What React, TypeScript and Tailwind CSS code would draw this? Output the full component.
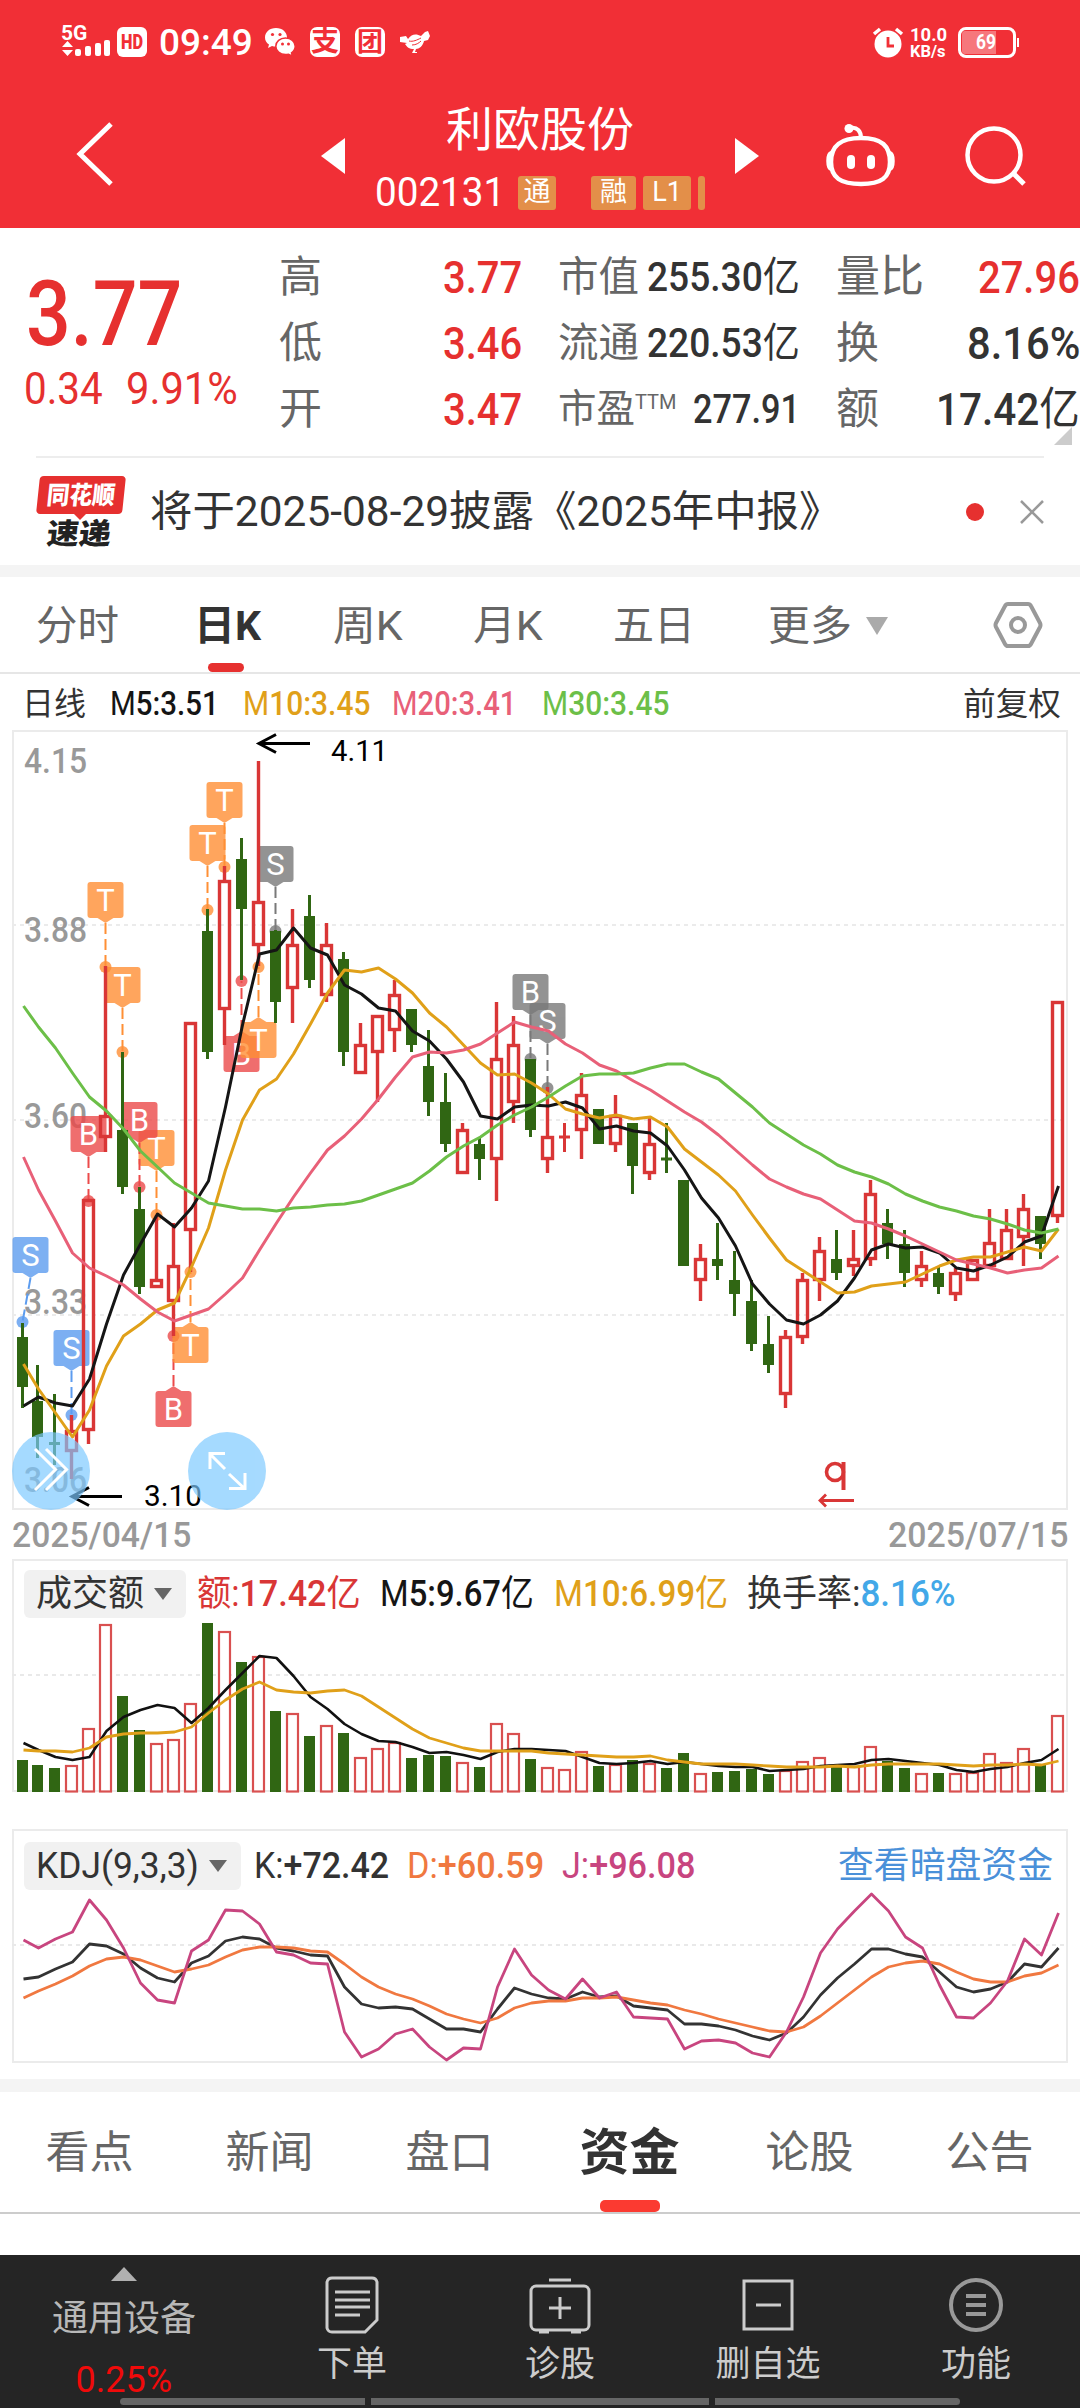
import React, { useLayoutEffect, useRef } from 'react';

const FONT = 'font-[Roboto,"Noto_Sans_CJK_SC",sans-serif]';

// Condenses or stretches a label so it fills exactly `w` pixels
const Fit = ({ w, className = '', children }: { w: number; className?: string; children: React.ReactNode }) => {
  const ref = useRef<HTMLSpanElement>(null);
  useLayoutEffect(() => {
    const el = ref.current;
    if (el) el.style.transform = `scaleX(${w / el.offsetWidth})`;
  });
  return (
    <span className={`block shrink-0 leading-none ${className}`} style={{ width: w }}>
      <span ref={ref} className="inline-block origin-left whitespace-nowrap leading-none align-top">{children}</span>
    </span>
  );
};

/* ---------- data ---------- */

// [up, high, open/close top, open/close bottom, low]
const candles: number[][] = [
  [0, 1323, 1337, 1387, 1408], [0, 1365, 1401, 1437, 1458], [0, 1394, 1442, 1445, 1465], [1, 1415, 1430, 1452, 1479],
  [1, 1199, 1199, 1431, 1444], [1, 966, 1115, 1138, 1152], [0, 1052, 1130, 1187, 1194], [0, 1187, 1209, 1287, 1294],
  [1, 1215, 1279, 1288, 1288], [1, 1223, 1265, 1302, 1336], [1, 1022, 1022, 1231, 1272], [0, 909, 931, 1052, 1059],
  [1, 866, 880, 1010, 1045], [0, 838, 859, 909, 980], [1, 761, 901, 946, 966], [0, 930, 931, 1002, 1023],
  [1, 909, 944, 989, 1023], [0, 895, 916, 980, 988], [1, 923, 944, 996, 1002], [0, 952, 959, 1052, 1066],
  [1, 1023, 1044, 1074, 1074], [1, 1015, 1015, 1053, 1102], [1, 980, 994, 1031, 1052], [0, 1009, 1009, 1045, 1052],
  [0, 1030, 1066, 1102, 1116], [0, 1073, 1102, 1144, 1152], [1, 1123, 1129, 1174, 1174], [0, 1137, 1144, 1159, 1180],
  [1, 1002, 1058, 1160, 1201], [1, 1016, 1044, 1103, 1123], [0, 1059, 1059, 1130, 1137], [1, 1087, 1136, 1160, 1173],
  [1, 1123, 1136, 1138, 1152], [1, 1073, 1094, 1131, 1159], [0, 1109, 1109, 1144, 1144], [1, 1095, 1115, 1145, 1152],
  [0, 1123, 1123, 1166, 1194], [1, 1117, 1143, 1174, 1180], [0, 1123, 1158, 1160, 1173], [0, 1180, 1180, 1266, 1266],
  [1, 1244, 1258, 1281, 1301], [0, 1223, 1259, 1266, 1280], [0, 1251, 1280, 1294, 1316], [0, 1280, 1301, 1344, 1351],
  [0, 1316, 1344, 1365, 1373], [1, 1330, 1336, 1395, 1408], [1, 1273, 1279, 1338, 1344], [1, 1237, 1250, 1281, 1301],
  [0, 1230, 1259, 1273, 1280], [1, 1230, 1258, 1267, 1276], [1, 1180, 1193, 1260, 1266], [0, 1209, 1223, 1244, 1259],
  [0, 1230, 1244, 1273, 1287], [1, 1251, 1265, 1281, 1287], [0, 1267, 1273, 1287, 1294], [1, 1268, 1272, 1295, 1301],
  [1, 1259, 1259, 1281, 1281], [1, 1209, 1242, 1267, 1267], [1, 1209, 1229, 1260, 1260], [1, 1194, 1208, 1238, 1266],
  [0, 1216, 1216, 1244, 1259], [1, 1001, 1001, 1217, 1223],
];

const ma5 = [1406, 1397, 1403, 1406, 1379, 1324, 1275, 1244, 1214, 1227, 1208, 1181, 1107, 1025, 954, 950, 928, 948, 955, 985, 994, 1008, 1011, 1031, 1041, 1059, 1082, 1116, 1119, 1107, 1105, 1106, 1102, 1108, 1129, 1126, 1131, 1133, 1146, 1170, 1198, 1218, 1246, 1284, 1304, 1320, 1324, 1315, 1301, 1278, 1250, 1244, 1248, 1247, 1253, 1268, 1271, 1265, 1257, 1242, 1236, 1186];
const ma10 = [1364, 1389, 1413, 1437, 1410, 1366, 1336, 1324, 1310, 1303, 1267, 1228, 1170, 1120, 1090, 1079, 1054, 1024, 993, 970, 972, 968, 979, 993, 1013, 1027, 1045, 1063, 1075, 1074, 1083, 1094, 1109, 1114, 1118, 1115, 1119, 1117, 1127, 1149, 1162, 1175, 1191, 1215, 1238, 1260, 1271, 1282, 1293, 1292, 1286, 1284, 1282, 1274, 1266, 1260, 1257, 1257, 1252, 1247, 1251, 1229];
const ma20 = [1157, 1190, 1221, 1253, 1268, 1276, 1285, 1299, 1312, 1321, 1315, 1309, 1294, 1278, 1250, 1223, 1197, 1173, 1150, 1136, 1119, 1099, 1077, 1057, 1052, 1053, 1050, 1044, 1033, 1022, 1027, 1031, 1044, 1053, 1065, 1071, 1081, 1090, 1101, 1112, 1122, 1135, 1150, 1165, 1179, 1187, 1194, 1199, 1210, 1221, 1223, 1229, 1236, 1244, 1252, 1260, 1264, 1268, 1273, 1270, 1268, 1256];
const ma30 = [1006, 1027, 1048, 1073, 1097, 1111, 1129, 1151, 1167, 1183, 1193, 1203, 1206, 1209, 1209, 1211, 1208, 1207, 1205, 1204, 1201, 1195, 1189, 1183, 1171, 1157, 1146, 1137, 1125, 1115, 1107, 1097, 1086, 1076, 1074, 1074, 1073, 1068, 1064, 1064, 1072, 1079, 1093, 1107, 1123, 1134, 1145, 1154, 1165, 1172, 1177, 1184, 1194, 1201, 1207, 1211, 1216, 1219, 1224, 1230, 1233, 1229];

const volTop = [1760, 1765, 1768, 1766, 1729, 1625, 1696, 1730, 1744, 1740, 1704, 1623, 1632, 1662, 1657, 1711, 1714, 1736, 1726, 1733, 1758, 1749, 1743, 1758, 1755, 1756, 1763, 1767, 1724, 1734, 1759, 1768, 1770, 1752, 1766, 1765, 1760, 1764, 1768, 1753, 1774, 1772, 1771, 1769, 1774, 1771, 1762, 1758, 1765, 1767, 1747, 1761, 1768, 1774, 1773, 1774, 1773, 1754, 1763, 1749, 1764, 1716];
const volMa5 = [1743, 1750, 1757, 1760, 1757, 1731, 1717, 1710, 1705, 1708, 1723, 1708, 1690, 1673, 1656, 1658, 1676, 1697, 1709, 1724, 1734, 1741, 1742, 1747, 1753, 1752, 1755, 1759, 1752, 1749, 1749, 1750, 1751, 1757, 1763, 1764, 1763, 1761, 1764, 1762, 1764, 1766, 1767, 1767, 1771, 1770, 1769, 1766, 1765, 1764, 1760, 1759, 1761, 1763, 1765, 1770, 1772, 1769, 1767, 1763, 1760, 1749];
const volMa10 = [1750, 1751, 1751, 1752, 1748, 1737, 1734, 1733, 1733, 1732, 1727, 1713, 1700, 1689, 1682, 1690, 1692, 1693, 1691, 1690, 1696, 1707, 1718, 1729, 1738, 1743, 1748, 1751, 1751, 1751, 1751, 1753, 1754, 1755, 1756, 1757, 1757, 1756, 1760, 1762, 1764, 1764, 1764, 1765, 1766, 1767, 1767, 1767, 1766, 1767, 1765, 1764, 1764, 1764, 1764, 1765, 1766, 1765, 1765, 1764, 1765, 1761];

const kdjJ = [1940, 1948, 1939, 1932, 1900, 1920, 1948, 1983, 2000, 2003, 1951, 1940, 1910, 1911, 1924, 1952, 1955, 1963, 1964, 2032, 2057, 2049, 2034, 2029, 2047, 2060, 2048, 2049, 1987, 1949, 1975, 1990, 1999, 1979, 1998, 1992, 2017, 2018, 2019, 2049, 2041, 2040, 2043, 2053, 2057, 2032, 1997, 1953, 1929, 1911, 1894, 1911, 1937, 1948, 1985, 2017, 2018, 2003, 1981, 1939, 1955, 1913];
const kdjK = [1979, 1977, 1969, 1962, 1944, 1946, 1954, 1968, 1978, 1982, 1963, 1956, 1941, 1937, 1939, 1948, 1951, 1955, 1956, 1987, 2004, 2008, 2007, 2009, 2019, 2029, 2029, 2032, 2009, 1988, 1994, 1998, 1999, 1992, 1997, 1996, 2006, 2008, 2010, 2024, 2024, 2026, 2030, 2036, 2040, 2033, 2017, 1995, 1978, 1964, 1949, 1949, 1954, 1957, 1972, 1987, 1992, 1989, 1982, 1964, 1967, 1948];
const kdjD = [1998, 1991, 1984, 1976, 1966, 1959, 1957, 1960, 1966, 1972, 1969, 1965, 1957, 1950, 1947, 1947, 1948, 1951, 1952, 1964, 1977, 1987, 1994, 1999, 2006, 2014, 2019, 2023, 2018, 2008, 2003, 2001, 2001, 1998, 1998, 1997, 2000, 2003, 2005, 2010, 2014, 2019, 2023, 2027, 2031, 2032, 2027, 2016, 2003, 1990, 1977, 1967, 1963, 1961, 1964, 1972, 1979, 1982, 1982, 1976, 1973, 1965];

const ORANGE = '#ff8f35';
const RED = '#ec4a4a';
const BLUE = '#5c9cef';
const GREY = '#797979';

const markers = [
  { i: 0, y: 1322, t: 'S', c: BLUE, dx: 8 },
  { i: 3, y: 1415, t: 'S', c: BLUE },
  { i: 4, y: 1201, t: 'B', c: RED },
  { i: 5, y: 967, t: 'T', c: ORANGE },
  { i: 6, y: 1052, t: 'T', c: ORANGE },
  { i: 8, y: 1215, t: 'T', c: ORANGE },
  { i: 7, y: 1187, t: 'B', c: RED },
  { i: 9, y: 1336, t: 'B', c: RED, below: true },
  { i: 10, y: 1272, t: 'T', c: ORANGE, below: true },
  { i: 11, y: 910, t: 'T', c: ORANGE },
  { i: 12, y: 867, t: 'T', c: ORANGE },
  { i: 13, y: 981, t: 'B', c: RED, below: true },
  { i: 14, y: 967, t: 'T', c: ORANGE, below: true },
  { i: 15, y: 931, t: 'S', c: GREY },
  { i: 30, y: 1059, t: 'B', c: GREY },
  { i: 31, y: 1088, t: 'S', c: GREY },
];

const xAt = (i: number) => (i === 0 ? 22.5 : 20.5 + 17 * i);
const points = (ys: number[]) => ys.map((y, i) => `${xAt(i) + 1},${y}`).join(' ');

/* ---------- charts ---------- */

const Line = ({ ys, color, width = 3 }: { ys: number[]; color: string; width?: number }) => (
  <polyline points={points(ys)} fill="none" stroke={color} strokeWidth={width} strokeLinejoin="round" />
);

const KLineChart = () => (
  <svg className="block" width="1080" height="784" viewBox="0 728 1080 784">
    <rect x="13" y="731" width="1054" height="778" fill="none" stroke="#ebebeb" strokeWidth="2" />
    {[925, 1120, 1315].map((y) => (
      <line key={y} x1="12" x2="1066" y1={y} y2={y} stroke="#ebebeb" strokeWidth="2" strokeDasharray="4 4" />
    ))}
    <g fill="#999" fontSize="35" fontFamily="Roboto" fontWeight="500">
      <text x="24" y="773" textLength="63" lengthAdjust="spacingAndGlyphs">4.15</text>
      <text x="24" y="942" textLength="63" lengthAdjust="spacingAndGlyphs">3.88</text>
      <text x="24" y="1128" textLength="63" lengthAdjust="spacingAndGlyphs">3.60</text>
      <text x="24" y="1314" textLength="63" lengthAdjust="spacingAndGlyphs">3.33</text>
      <text x="24" y="1492" textLength="63" lengthAdjust="spacingAndGlyphs">3.06</text>
    </g>

    {markers.map((m) => {
      const x = xAt(m.i);
      const bx = x + (m.dx ?? 0);
      const top = m.below ? m.y + 55 : m.y - 85;
      const tip = m.below ? top - 5 : top + 41;
      const base = m.below ? top : top + 36;
      return (
        <g key={m.i}>
          <g fill={m.c} opacity="0.8">
            <rect x={bx - 18} y={top} width="36" height="36" rx="3" />
            <polygon points={`${bx - 8},${base} ${bx + 8},${base} ${bx},${tip}`} />
            <circle cx={x} cy={m.y} r="6" />
          </g>
          <line x1={bx} y1={tip} x2={x} y2={m.y} stroke={m.c} strokeWidth="2" strokeDasharray="11 5" />
          <text x={bx} y={top + 29} fill="#fff" fontSize="31" fontFamily="Roboto" textAnchor="middle">{m.t}</text>
        </g>
      );
    })}

    {candles.map(([up, high, top, bottom, low], i) => {
      const x = xAt(i);
      const flat = bottom - top < 5;
      if (flat) {
        return (
          <g key={i} stroke={up ? '#d93636' : '#306613'} strokeWidth="3">
            <line x1={x} x2={x} y1={high} y2={low} />
            <line x1={x - 5.5} x2={x + 5.5} y1={(top + bottom) / 2} y2={(top + bottom) / 2} />
          </g>
        );
      }
      return up ? (
        <g key={i} fill="none" stroke="#d93636" strokeWidth="3.4">
          <line x1={x} x2={x} y1={high} y2={top} />
          <line x1={x} x2={x} y1={bottom} y2={low} />
          <rect x={x - 5} y={top + 1.5} width="10" height={bottom - top - 3} />
        </g>
      ) : (
        <g key={i} fill="#306613">
          <rect x={x - 1.5} y={high} width="3" height={low - high} />
          <rect x={x - 5.5} y={top} width="11" height={bottom - top} />
        </g>
      );
    })}

    <Line ys={ma5} color="#151515" />
    <Line ys={ma10} color="#e0a019" />
    <Line ys={ma20} color="#e86078" />
    <Line ys={ma30} color="#6cbf48" />

    <g stroke="#000" strokeWidth="3" fill="none">
      <path d="M310 743.5H260M276 734.5L259 743.5L276 752.5" />
      <path d="M122 1496.5H74M89 1487.5L72 1496.5L89 1505.5" />
    </g>
    <g fontSize="29" fontFamily="Roboto" fill="#000">
      <text x="331" y="761" textLength="57" lengthAdjust="spacingAndGlyphs">4.11</text>
      <text x="144" y="1506" textLength="58" lengthAdjust="spacingAndGlyphs">3.10</text>
    </g>
    <g stroke="#d93636" fill="none">
      <circle cx="835" cy="1472" r="8.5" strokeWidth="3.6" />
      <path d="M843.5 1462V1490" strokeWidth="4" />
      <path d="M854 1500.5H820M826 1494.5L820 1500.5L826 1506.5" strokeWidth="2.8" />
    </g>

    <g fill="#7cc9ff" opacity="0.68">
      <circle cx="51" cy="1471" r="39" />
      <circle cx="227" cy="1471" r="39" />
    </g>
    <g stroke="#fff" strokeWidth="3" fill="none">
      <path d="M35 1449L55.5 1469.5L35 1490M46 1449L66.5 1469.5L46 1490" />
      <path d="M225 1469L210 1454M210 1469V1453.5H225M229 1474L244.5 1488.5M229 1488.5H245V1473" />
    </g>
  </svg>
);

const VolumeBars = () => (
  <svg className="block" width="1080" height="176" viewBox="0 1618 1080 176">
    <path d="M13 1618V1791H1067V1618" fill="none" stroke="#ebebeb" strokeWidth="2" />
    <line x1="12" x2="1066" y1="1675" y2="1675" stroke="#e9e9e9" strokeWidth="2" strokeDasharray="4 4" />
    {volTop.map((top, i) =>
      candles[i][0] ? (
        <rect key={i} x={xAt(i) - 5.5} y={top} width="11" height={1791.5 - top} fill="#fff" stroke="#d95050" strokeWidth="2.2" />
      ) : (
        <rect key={i} x={xAt(i) - 5.5} y={top} width="11" height={1792 - top} fill="#306613" />
      )
    )}
    <Line ys={volMa5} color="#111" width={2.6} />
    <Line ys={volMa10} color="#e0a019" width={2.8} />
  </svg>
);

const KdjLines = () => (
  <svg className="block" width="1080" height="172" viewBox="0 1890 1080 172">
    <line x1="12" x2="1066" y1="1945" y2="1945" stroke="#e9e9e9" strokeWidth="2" strokeDasharray="4 4" />
    <Line ys={kdjK} color="#333" width={2.8} />
    <Line ys={kdjD} color="#f07840" width={2.8} />
    <Line ys={kdjJ} color="#c8457f" width={2.8} />
  </svg>
);

/* ---------- top ---------- */

const StatusBar = () => (
  <div className="flex h-[84px] items-center pl-[61px] text-white">
    <div className="h-[38px] w-[50px]">
      <Fit w={26} className="text-[21px] font-bold">5G</Fit>
      <svg className="-mt-[4px] block" width="50" height="18" viewBox="0 0 50 18" fill="white">
        <path d="M1 7L6.5 1L12 7ZM1 10L6.5 16L12 10Z" />
        <rect x="14" y="9" width="6" height="7" rx="2" />
        <rect x="24" y="6" width="6" height="10" rx="2" />
        <rect x="34" y="3" width="6" height="13" rx="2" />
        <rect x="43" y="0" width="6" height="16" rx="2" />
      </svg>
    </div>
    <div className="ml-[6px] flex h-[30px] w-[30px] items-center justify-center rounded-[6px] bg-white text-[#f12f36]">
      <Fit w={22} className="text-[20px] font-black">HD</Fit>
    </div>
    <Fit w={94} className="ml-[12px] text-[37px] font-medium">09:49</Fit>
    <svg className="ml-[11px] shrink-0" width="32" height="32" viewBox="0 0 32 32">
      <path d="M12 2C5.500 2 1 6.200 1 11.400c0 3 1.500 5.500 4 7.200L4 22l4-2c1.300.4 2.600.6 4 .6C18.500 20.600 23 16.600 23 11.400S18.500 2 12 2Z" fill="#fff" />
      <path d="M21.500 12c-5.500 0-9.700 3.700-9.700 8.300s4.200 8.300 9.700 8.300c1 0 2-.1 3-.4l4 2-1-3.400c2.300-1.600 3.700-3.900 3.700-6.500 0-4.600-4.200-8.300-9.700-8.300Z" fill="#fff" stroke="#f12f36" strokeWidth="1.5" />
      <g fill="#f12f36"><circle cx="8.5" cy="8.5" r="1.6" /><circle cx="16" cy="8.5" r="1.6" /><circle cx="18.5" cy="18" r="1.5" /><circle cx="24.5" cy="18" r="1.5" /></g>
    </svg>
    <div className="ml-[14px] flex h-[30px] w-[30px] items-center justify-center rounded-[7px] bg-white text-[28px] leading-none font-bold text-[#f12f36]">支</div>
    <div className="ml-[15px] flex h-[30px] w-[30px] items-center justify-center rounded-[7px] bg-white text-[26px] leading-none font-bold text-[#f12f36]">团</div>
    <svg className="ml-[14px] shrink-0" width="32" height="24" viewBox="0 0 32 24" fill="#fff">
      <path d="M1 7L7 6L9 9C13 3 18 4 22 6L26 2L29 1L31 6L29 10L25 11C24 16 20 19 17 19L16 22H18V23H13L15 19C10 19 8 17 6 14L8 13L1 12Z" />
      <path d="M10 11C14 12 18 10 22 8M13 15C17 15 20 13 22 11" stroke="#f12f36" fill="none" />
    </svg>
    <svg className="ml-[441px] shrink-0" width="32" height="32" viewBox="0 0 32 32">
      <circle cx="16" cy="18" r="13.5" fill="#fff" />
      <path d="M2 8L8 3M30 8L24 3" stroke="#fff" strokeWidth="3.5" />
      <path d="M16 11V20H22" stroke="#f12f36" strokeWidth="2.8" fill="none" />
    </svg>
    <div className="ml-[6px]">
      <Fit w={37} className="text-[19px] font-bold">10.0</Fit>
      <Fit w={36} className="text-[16px] font-bold">KB/s</Fit>
    </div>
    <div className="ml-[11px] flex h-[31px] w-[58px] items-center rounded-[8px] border-[3px] border-white p-[1px]">
      <div className="flex h-full w-[34px] items-center justify-end rounded-l-[3px] bg-white/35">
        <Fit w={20} className="text-[20px] font-bold">69</Fit>
      </div>
    </div>
    <div className="ml-[1px] h-[9px] w-[2px] bg-white"></div>
  </div>
);

const Tag = ({ w, children }: { w: number; children?: React.ReactNode }) => (
  <div className="flex h-[34px] shrink-0 items-center justify-center overflow-hidden rounded-[3px] bg-[#e38f49] text-[27px] leading-none text-white" style={{ width: w }}>
    {children}
  </div>
);

const TitleBar = () => (
  <div className="flex h-[144px] items-center text-white">
    <svg className="mb-[5px] ml-[74px] shrink-0" width="42" height="68" viewBox="0 0 42 68" fill="none" stroke="#fff" strokeWidth="5">
      <path d="M37 4L6 34L37 64" />
    </svg>
    <svg className="ml-[205px] shrink-0" width="24" height="36" viewBox="0 0 24 36" fill="#fff"><path d="M24 0V36L0 18Z" /></svg>
    <div className="flex h-full w-[390px] shrink-0 flex-col">
      <Fit w={188} className="mt-[22px] ml-[101px] text-[47px]">利欧股份</Fit>
      <div className="mt-[19px] ml-[30px] flex items-center">
        <Fit w={130} className="text-[41px]">002131</Fit>
        <div className="ml-[13px] flex">
          <Tag w={38}>通</Tag>
          <div className="ml-[35px] flex gap-[7px]">
            <Tag w={45}>融</Tag>
            <Tag w={48}>L1</Tag>
            <Tag w={7} />
          </div>
        </div>
      </div>
    </div>
    <svg className="shrink-0" width="24" height="36" viewBox="0 0 24 36" fill="#fff"><path d="M0 0V36L24 18Z" /></svg>
    <svg className="mb-[5px] ml-[65px] shrink-0" width="74" height="68" viewBox="0 0 74 68">
      <path d="M37 18C58 18 66 26 66 42C66 58 57 64 37 64C17 64 7 58 7 42C7 26 16 18 37 18Z" fill="none" stroke="#fff" strokeWidth="4.5" />
      <path d="M7 32C2 33 2 49 7 50ZM66 32C71 33 71 49 66 50Z" fill="#fff" stroke="#fff" strokeWidth="2" />
      <path d="M37 18C37 11 33 7 27 8" fill="none" stroke="#fff" strokeWidth="4" />
      <circle cx="25" cy="8.5" r="4.5" fill="#fff" />
      <rect x="23" y="35" width="8" height="14" rx="4" fill="#fff" />
      <rect x="43" y="35" width="8" height="14" rx="4" fill="#fff" />
    </svg>
    <svg className="ml-[64px] shrink-0" width="66" height="66" viewBox="0 0 66 66" fill="none" stroke="#fff" strokeWidth="4.5">
      <circle cx="32" cy="32" r="26.5" />
      <path d="M51 50L62 61" strokeWidth="5" />
    </svg>
  </div>
);

const Quote = () => (
  <div className="relative flex h-[228px] text-[#333]">
    <div className="w-[279px] shrink-0 text-[#e6302f]">
      <Fit w={156} className="mt-[41px] ml-[26px] text-[91px] font-medium">3.77</Fit>
      <div className="mt-[6px] ml-[24px] flex">
        <Fit w={79} className="text-[45px]">0.34</Fit>
        <Fit w={112} className="ml-[23px] text-[45px]">9.91%</Fit>
      </div>
    </div>
    <div className="mt-[16px] w-[243px] shrink-0 text-[#666]">
      {[['高', '3.77'], ['低', '3.46'], ['开', '3.47']].map(([k, v]) => (
        <div key={k} className="flex h-[66px] items-center justify-between">
          <Fit w={43} className="text-[43px]">{k}</Fit>
          <Fit w={79} className="text-[45px] font-medium text-[#e6302f]">{v}</Fit>
        </div>
      ))}
    </div>
    <div className="mt-[16px] ml-[36px] w-[242px] shrink-0 text-[#666]">
      <div className="flex h-[66px] items-center justify-between">
        <Fit w={81} className="text-[41px]">市值</Fit>
        <Fit w={153} className="text-[41px] text-[#333]"><b className="font-medium">255.30</b>亿</Fit>
      </div>
      <div className="flex h-[66px] items-center justify-between">
        <Fit w={81} className="text-[41px]">流通</Fit>
        <Fit w={153} className="text-[41px] text-[#333]"><b className="font-medium">220.53</b>亿</Fit>
      </div>
      <div className="flex h-[66px] items-center">
        <Fit w={77} className="text-[39px]">市盈</Fit>
        <Fit w={41} className="mb-[15px] text-[20px]">TTM</Fit>
        <Fit w={107} className="ml-auto text-[41px] font-medium text-[#333]">277.91</Fit>
      </div>
    </div>
    <div className="mt-[16px] ml-[36px] w-[244px] shrink-0 text-[#666]">
      <div className="flex h-[66px] items-center justify-between">
        <Fit w={88} className="text-[44px]">量比</Fit>
        <Fit w={102} className="text-[45px] font-medium text-[#e6302f]">27.96</Fit>
      </div>
      <div className="flex h-[66px] items-center justify-between">
        <Fit w={43} className="text-[43px]">换</Fit>
        <Fit w={113} className="text-[45px] font-medium text-[#333]">8.16%</Fit>
      </div>
      <div className="flex h-[66px] items-center justify-between">
        <Fit w={43} className="text-[43px]">额</Fit>
        <Fit w={144} className="text-[45px] text-[#333]"><b className="font-medium">17.42</b>亿</Fit>
      </div>
    </div>
    <svg className="absolute top-[199px] right-[8px]" width="18" height="18" viewBox="0 0 18 18" fill="#ccc"><path d="M18 0V18H0Z" /></svg>
  </div>
);

const News = () => (
  <div className="mx-[36px] flex h-[109px] items-center border-t-2 border-[#ededed]">
    <div className="relative mt-[2px] w-[90px] shrink-0">
      <div className="ml-[2px] flex h-[38px] w-[86px] -skew-x-6 items-center justify-center rounded-[4px] bg-[#e6302f]">
        <Fit w={68} className="text-[25px] font-black text-white">同花顺</Fit>
      </div>
      <svg className="ml-[38px] block" width="12" height="6" viewBox="0 0 12 6" fill="#e6302f"><path d="M0 0H12L6 6Z" /></svg>
      <div className="ml-[11px] -skew-x-6">
        <Fit w={64} className="text-[29px] font-black text-[#222]">速递</Fit>
      </div>
    </div>
    <Fit w={691} className="ml-[24px] text-[42px] text-[#333]">将于2025-08-29披露《2025年中报》</Fit>
    <div className="mr-[36px] ml-auto h-[18px] w-[18px] shrink-0 rounded-full bg-[#e6302f]"></div>
    <svg className="shrink-0" width="24" height="24" viewBox="0 0 24 24" stroke="#999" strokeWidth="2.5"><path d="M1 1L23 23M23 1L1 23" /></svg>
  </div>
);

const PeriodTabs = () => (
  <div className="relative flex h-[97px] items-center border-b-2 border-[#e6e6e6] pt-[3px] text-[41px] text-[#666]">
    <Fit w={83} className="ml-[36px]">分时</Fit>
    <Fit w={67} className="ml-[75px] font-bold text-[#333]">日K</Fit>
    <div className="absolute bottom-0 left-[208px] h-[9px] w-[36px] rounded-full bg-[#e6302f]"></div>
    <Fit w={70} className="ml-[72px]">周K</Fit>
    <Fit w={70} className="ml-[70px]">月K</Fit>
    <Fit w={82} className="ml-[70px]">五日</Fit>
    <Fit w={84} className="ml-[73px]">更多</Fit>
    <svg className="ml-[14px] shrink-0" width="22" height="18" viewBox="0 0 22 18" fill="#aaa"><path d="M0 0H22L11 18Z" /></svg>
    <svg className="mb-[3px] ml-[105px] shrink-0" width="50" height="48" viewBox="0 0 50 48" fill="none" stroke="#999" strokeWidth="4">
      <path d="M15 3H35Q37 3 38 5L47 22Q48 24 47 26L38 43Q37 45 35 45H15Q13 45 12 43L3 26Q2 24 3 22L12 5Q13 3 15 3Z" />
      <circle cx="25" cy="24" r="7" />
    </svg>
  </div>
);

const Legend = () => (
  <div className="flex h-[54px] items-center pt-[5px] text-[33px]">
    <Fit w={64} className="ml-[22px] text-[32px] text-[#333]">日线</Fit>
    <Fit w={109} className="ml-[24px] text-[#151515]">M<b className="font-medium">5:3.51</b></Fit>
    <Fit w={127} className="ml-[24px] text-[#e0a019]">M<b className="font-medium">10:3.45</b></Fit>
    <Fit w={124} className="ml-[22px] text-[#e86078]">M<b className="font-medium">20:3.41</b></Fit>
    <Fit w={127} className="ml-[26px] text-[#6cbf48]">M<b className="font-medium">30:3.45</b></Fit>
    <Fit w={98} className="ml-[294px] text-[32px] text-[#333]">前复权</Fit>
  </div>
);

const Dropdown = ({ label, w }: { label: string; w: number }) => (
  <div className="flex h-[48px] shrink-0 items-center rounded-[6px] bg-[#f1f1f1] pr-[14px] pl-[12px] text-[#333]">
    <Fit w={w}>{label}</Fit>
    <svg className="ml-[10px]" width="18" height="12" viewBox="0 0 18 12" fill="#666"><path d="M0 0H18L9 12Z" /></svg>
  </div>
);

const Volume = () => (
  <div className="h-[235px]">
    <div className="mx-[12px] flex h-[59px] items-end border-x-2 border-t-2 border-[#ebebeb] pl-[10px] text-[36px]">
      <div className="flex items-center">
        <Dropdown label="成交额" w={108} />
        <Fit w={164} className="ml-[11px] text-[#d93636]">额:<b className="font-medium">17.42</b>亿</Fit>
        <Fit w={154} className="ml-[19px] text-[#151515]">M<b className="font-medium">5:9.67</b>亿</Fit>
        <Fit w={174} className="ml-[20px] text-[#e0a019]">M<b className="font-medium">10:6.99</b>亿</Fit>
        <Fit w={209} className="ml-[19px] text-[#333]">换手率:<b className="font-medium text-[#42a8e8]">8.16%</b></Fit>
      </div>
    </div>
    <VolumeBars />
  </div>
);

const Kdj = () => (
  <div className="h-[250px]">
    <div className="mx-[12px] h-[234px] border-2 border-[#ebebeb]">
      <div className="flex h-[59px] items-end pl-[10px] text-[36px]">
        <div className="flex w-full items-center">
          <Dropdown label="KDJ(9,3,3)" w={163} />
          <Fit w={135} className="ml-[13px] text-[#333]">K:<b className="font-medium">+72.42</b></Fit>
          <Fit w={137} className="ml-[18px] text-[#f07840]">D:<b className="font-medium">+60.59</b></Fit>
          <Fit w={133} className="ml-[18px] text-[#c8457f]">J:<b className="font-medium">+96.08</b></Fit>
          <Fit w={215} className="ml-[143px] text-[#4a90d9]">查看暗盘资金</Fit>
        </div>
      </div>
      <div className="-ml-[14px] w-[1080px]">
        <KdjLines />
      </div>
    </div>
  </div>
);

/* ---------- bottom ---------- */

const sections = ['看点', '新闻', '盘口', '资金', '论股', '公告'];

const SectionTabs = () => (
  <div className="grid h-[122px] grid-cols-6 border-b-2 border-[#ccc] text-[44px] text-[#666]">
    {sections.map((s) => (
      <div key={s} className="relative flex items-center justify-center pt-[2px] pr-[1px]">
        {s === '资金' ? (
          <>
            <span className="text-[50px] leading-none font-bold text-[#333]">{s}</span>
            <div className="absolute bottom-0 h-[12px] w-[60px] rounded-[5px] bg-[#fb3a31]"></div>
          </>
        ) : (
          <span className="leading-none">{s}</span>
        )}
      </div>
    ))}
  </div>
);

const NavItem = ({ label, children }: { label: string; children: React.ReactNode }) => (
  <div className="flex w-[208px] flex-col items-center">
    <svg className="mt-[18px]" width="64" height="64" viewBox="0 0 64 64" fill="none" stroke="#ccc" strokeWidth="3">
      {children}
    </svg>
    <span className="mt-[10px] text-[35px] leading-none text-[#ccc]">{label}</span>
  </div>
);

const BottomNav = () => (
  <div className="relative flex h-[153px] bg-[#252525]">
    <div className="flex w-[248px] flex-col items-center text-[36px]">
      <svg className="mt-[12px]" width="26" height="14" viewBox="0 0 26 14" fill="#b0b0b0"><path d="M13 0L26 14H0Z" /></svg>
      <Fit w={144} className="mt-[20px] text-[#b8b8b8]">通用设备</Fit>
      <Fit w={97} className="mt-[25px] text-[#f00a0a]">0.25%</Fit>
    </div>
    <NavItem label="下单">
      <path d="M12 5H52Q56 5 57 9V47L45 59H12Q8 59 7 55V9Q8 5 12 5Z" />
      <path d="M15 19H50M15 27H50M15 34H50M15 42H40" />
    </NavItem>
    <NavItem label="诊股">
      <rect x="3" y="13" width="58" height="44" rx="5" />
      <path d="M21 7H43M32 24V46M21 35H43M11 59H21M43 59H53" />
    </NavItem>
    <NavItem label="删自选">
      <path d="M8 8H56V56H8ZM20 32H45" />
    </NavItem>
    <NavItem label="功能">
      <g stroke="#999" strokeWidth="4">
        <circle cx="32" cy="32" r="25" />
        <path d="M22 23H42M22 32H42M22 41H42" />
      </g>
    </NavItem>
    <div className="absolute bottom-[3px] left-[120px] flex gap-[6px]">
      <div className="h-[7px] w-[245px] rounded-l-full bg-[#666]"></div>
      <div className="h-[7px] w-[338px] bg-[#666]"></div>
      <div className="h-[7px] w-[245px] rounded-r-full bg-[#666]"></div>
    </div>
  </div>
);

export default function App() {
  return (
    <div className={`h-[2408px] w-[1080px] overflow-hidden bg-white ${FONT}`}>
      <div className="bg-[#f12f36]">
        <StatusBar />
        <TitleBar />
      </div>
      <Quote />
      <News />
      <div className="h-[12px] bg-[#f4f4f4]"></div>
      <PeriodTabs />
      <Legend />
      <KLineChart />
      <div className="flex h-[47px] justify-between px-[12px] pt-[6px] text-[35px] font-medium text-[#999]">
        <Fit w={179}>2025/04/15</Fit>
        <Fit w={180}>2025/07/15</Fit>
      </div>
      <Volume />
      <div className="h-[35px]"></div>
      <Kdj />
      <div className="h-[13px] bg-[#f4f4f4]"></div>
      <SectionTabs />
      <div className="h-[41px]"></div>
      <BottomNav />
    </div>
  );
}
